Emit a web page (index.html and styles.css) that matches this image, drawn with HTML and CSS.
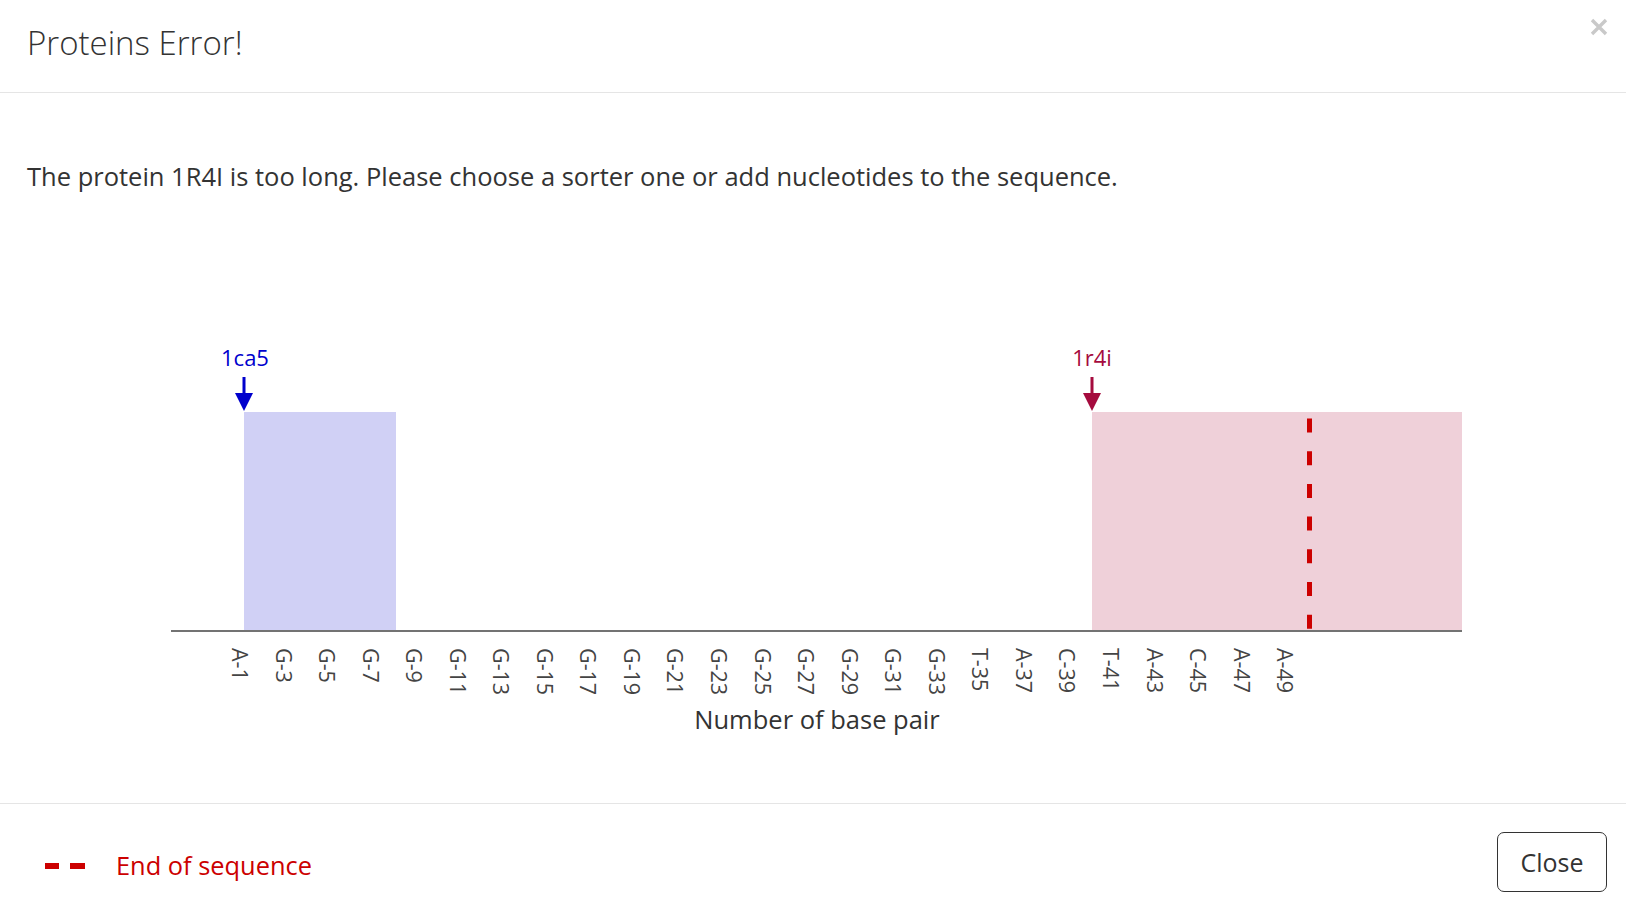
FILE: index.html
```html
<!DOCTYPE html>
<html lang="en">
<head>
<meta charset="utf-8">
<title>Proteins Error!</title>
<link rel="stylesheet" href="styles.css">
</head>
<body>
<div class="modal">
  <div class="modal-header">
    <h4 class="modal-title">Proteins Error!</h4>
    <button class="close" aria-label="Close">
      <svg width="18" height="18" viewBox="0 0 18 18"><path d="M2 2 L16 16 M16 2 L2 16" stroke="#c9c9c9" stroke-width="3.4" stroke-linecap="butt"/></svg>
    </button>
  </div>
  <div class="modal-body">
    <p class="message">The protein 1R4I is too long. Please choose a sorter one or add nucleotides to the sequence.</p>
    <svg class="chart" width="1626" height="610" viewBox="0 0 1626 610">
      <g transform="translate(0,-193)">
        <rect x="244" y="412" width="152" height="218" fill="#d0d0f5"/>
        <rect x="1092" y="412" width="370" height="218" fill="#efd0d9"/>
        <line x1="1309.5" y1="418.5" x2="1309.5" y2="630" stroke="#cc0000" stroke-width="5" stroke-dasharray="14 18.7"/>
        <line x1="171" y1="631" x2="1462" y2="631" stroke="#444" stroke-width="1.6"/>

        <text class="prot prot-blue" x="245" y="366">1ca5</text>
        <rect x="242.5" y="377" width="3" height="17" fill="#0000cd"/>
        <polygon points="235,393 253,393 244,411" fill="#0000cd"/>

        <text class="prot prot-red" x="1092" y="366">1r4i</text>
        <rect x="1090.5" y="377" width="3" height="17" fill="#a50b3e"/>
        <polygon points="1083,393 1101,393 1092,411" fill="#a50b3e"/>

        <g class="ticks">
          <text transform="translate(239.5,648) rotate(90)" dy="0.35em">A-1</text>
          <text transform="translate(283.05,648) rotate(90)" dy="0.35em">G-3</text>
          <text transform="translate(326.6,648) rotate(90)" dy="0.35em">G-5</text>
          <text transform="translate(370.15,648) rotate(90)" dy="0.35em">G-7</text>
          <text transform="translate(413.7,648) rotate(90)" dy="0.35em">G-9</text>
          <text transform="translate(457.25,648) rotate(90)" dy="0.35em">G-11</text>
          <text transform="translate(500.8,648) rotate(90)" dy="0.35em">G-13</text>
          <text transform="translate(544.35,648) rotate(90)" dy="0.35em">G-15</text>
          <text transform="translate(587.9,648) rotate(90)" dy="0.35em">G-17</text>
          <text transform="translate(631.45,648) rotate(90)" dy="0.35em">G-19</text>
          <text transform="translate(675,648) rotate(90)" dy="0.35em">G-21</text>
          <text transform="translate(718.55,648) rotate(90)" dy="0.35em">G-23</text>
          <text transform="translate(762.1,648) rotate(90)" dy="0.35em">G-25</text>
          <text transform="translate(805.65,648) rotate(90)" dy="0.35em">G-27</text>
          <text transform="translate(849.2,648) rotate(90)" dy="0.35em">G-29</text>
          <text transform="translate(892.75,648) rotate(90)" dy="0.35em">G-31</text>
          <text transform="translate(936.3,648) rotate(90)" dy="0.35em">G-33</text>
          <text transform="translate(979.85,648) rotate(90)" dy="0.35em">T-35</text>
          <text transform="translate(1023.4,648) rotate(90)" dy="0.35em">A-37</text>
          <text transform="translate(1066.95,648) rotate(90)" dy="0.35em">C-39</text>
          <text transform="translate(1110.5,648) rotate(90)" dy="0.35em">T-41</text>
          <text transform="translate(1154.05,648) rotate(90)" dy="0.35em">A-43</text>
          <text transform="translate(1197.6,648) rotate(90)" dy="0.35em">C-45</text>
          <text transform="translate(1241.15,648) rotate(90)" dy="0.35em">A-47</text>
          <text transform="translate(1284.7,648) rotate(90)" dy="0.35em">A-49</text>
        </g>
        <text class="axis-title" x="817" y="729">Number of base pair</text>
      </g>
    </svg>
  </div>
  <div class="modal-footer">
    <div class="legend">
      <svg class="legend-swatch" width="40" height="6" viewBox="0 0 40 6"><rect x="0" y="0" width="14" height="6" fill="#cc0000"/><rect x="25" y="0" width="15" height="6" fill="#cc0000"/></svg>
      <span class="legend-label">End of sequence</span>
    </div>
    <button class="btn">Close</button>
  </div>
</div>
</body>
</html>
```

FILE: styles.css
```css
* { box-sizing: border-box; }
html, body {
  margin: 0;
  padding: 0;
  background: #fff;
  overflow: hidden;
}
body {
  font-family: "Open Sans", "Noto Sans", "Liberation Sans", sans-serif;
  color: #333;
}
.modal {
  width: 1626px;
  height: 913px;
  display: flex;
  flex-direction: column;
}
.modal-header {
  position: relative;
  height: 93px;
  padding: 20px 27px 0;
  border-bottom: 1px solid #e5e5e5;
}
.modal-title {
  margin: 0;
  font-size: 33px;
  font-weight: 300;
  line-height: 45px;
  color: #333;
}
.close {
  position: absolute;
  top: 18px;
  right: 18px;
  padding: 0;
  border: 0;
  background: transparent;
  line-height: 0;
}
.modal-body {
  display: flex;
  flex-direction: column;
}
.message {
  margin: 66px 0 0;
  padding-left: 27px;
  font-size: 25.5px;
  line-height: 34px;
  color: #333;
}
.chart {
  display: block;
}
.prot {
  font-family: "Open Sans", sans-serif;
  font-size: 22px;
  text-anchor: middle;
}
.prot-blue { fill: #0000cd; }
.prot-red { fill: #a50b3e; }
.ticks text {
  font-family: "Open Sans", sans-serif;
  font-size: 21.5px;
  fill: #444;
}
.axis-title {
  font-family: "Open Sans", sans-serif;
  font-size: 25.5px;
  fill: #333;
  text-anchor: middle;
}
.modal-footer {
  flex: 1;
  border-top: 1px solid #e5e5e5;
  display: flex;
  justify-content: space-between;
  align-items: flex-start;
  padding: 28px 19px 0 45px;
}
.legend {
  display: flex;
  align-items: center;
  margin-top: 16px;
  height: 34px;
}
.legend-swatch {
  display: block;
  margin-top: 2px;
}
.legend-label {
  margin-left: 31px;
  font-size: 25.4px;
  line-height: 34px;
  color: #cc0000;
}
.btn {
  width: 110px;
  height: 60px;
  padding: 0;
  border: 1px solid #333;
  border-radius: 7px;
  background: #fff;
  font-family: "Open Sans", sans-serif;
  font-size: 25px;
  color: #333;
}
```
